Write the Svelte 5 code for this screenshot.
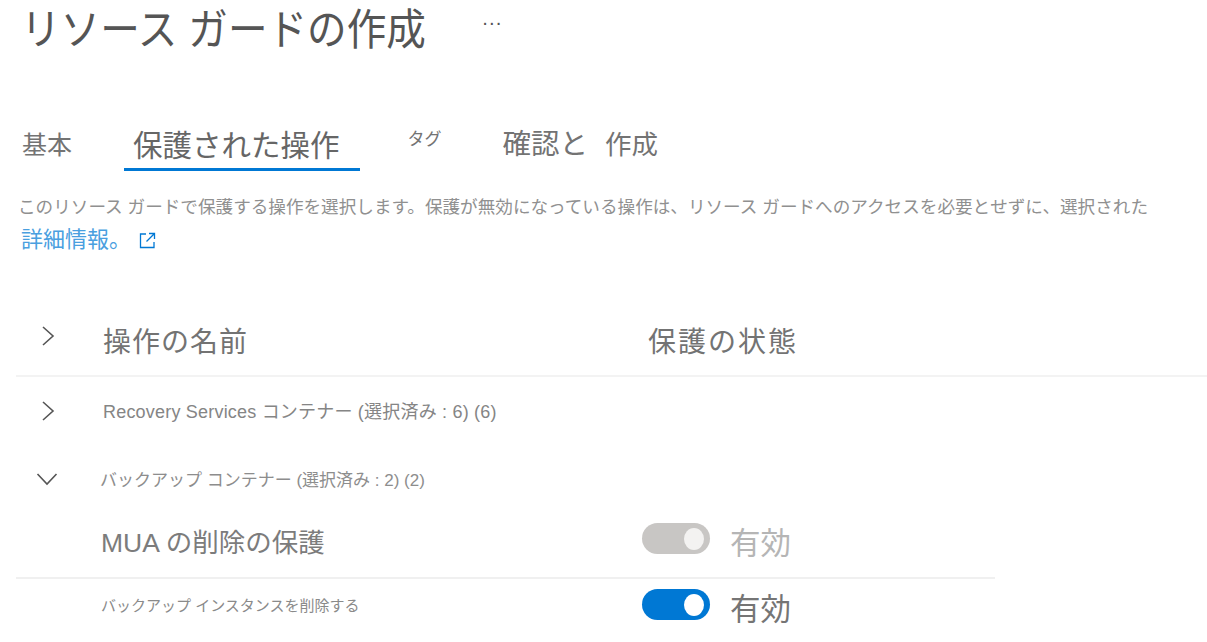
<script lang="ts">
  interface OperationRow {
    readonly name: string;
    readonly size: 'large' | 'small';
    readonly on: boolean;
    readonly disabled: boolean;
  }

  const rows: OperationRow[] = [
    { name: 'MUA の削除の保護', size: 'large', on: true, disabled: true },
    { name: 'バックアップ インスタンスを削除する', size: 'small', on: true, disabled: false },
  ];
</script>

<main class="page">
  <header class="title-row">
    <h1>リソース ガードの作成</h1>
    <span class="more">···</span>
  </header>

  <nav class="tabs">
    <span class="tab basics">基本</span>
    <span class="tab active">保護された操作</span>
    <span class="tab tags">タグ</span>
    <span class="tab review"><span class="review-a">確認と</span><span class="review-b">作成</span></span>
  </nav>

  <p class="desc">このリソース ガードで保護する操作を選択します。保護が無効になっている操作は、リソース ガードへのアクセスを必要とせずに、選択された</p>
  <a class="learn" href="#learn">
    詳細情報。
    <svg width="17" height="17" viewBox="0 0 17 17" fill="none" stroke="#0078d4" stroke-width="1.3">
      <path d="M7 2H1.500v13.500H15V10" />
      <path d="M10 1.500h5.500V7M15.500 1.500 7.500 9.500" />
    </svg>
  </a>

  <div class="table">
    <div class="row head">
      <svg class="chev up" width="14" height="22" viewBox="0 0 14 22"><path d="M2 2l10 9-10 9" /></svg>
      <span class="col-name">操作の名前</span>
      <span class="col-state">保護の状態</span>
    </div>

    <div class="row group first">
      <svg class="chev" width="14" height="22" viewBox="0 0 14 22"><path d="M2 2l10 9-10 9" /></svg>
      <span class="group-name">Recovery Services コンテナー (選択済み : 6) (6)</span>
    </div>

    <div class="row group second">
      <svg class="chev down" width="22" height="14" viewBox="0 0 22 14"><path d="M1.500 2l9.500 10 9.500-10" /></svg>
      <span class="group-name thin">バックアップ コンテナー (選択済み : 2) (2)</span>
    </div>

    {#each rows as row}
      <div class="row op" class:large={row.size === 'large'}>
        <span class="op-name">{row.name}</span>
        <span class="state" class:disabled={row.disabled}>
          <span class="toggle"><span class="knob"></span></span>
          <span class="state-label">有効</span>
        </span>
      </div>
    {/each}
  </div>
</main>

<style>
  :global(body) {
    background: #fff;
    overflow: hidden;
  }

  .page {
    width: 1207px;
    height: 642px;
    overflow: hidden;
    font-family: 'Liberation Sans', 'Noto Sans CJK JP', sans-serif;
    color: #737373;
  }

  .title-row {
    display: flex;
    align-items: flex-start;
    padding-left: 21px;
    height: 123px;
  }

  h1 {
    margin: 0;
    font-size: 39.600px;
    line-height: 60px;
    font-weight: 400;
    color: #555;
    white-space: nowrap;
    transform: scaleY(1.08);
    transform-origin: left center;
  }

  .more {
    margin-left: 56px;
    margin-top: 10px;
    font-size: 20px;
    line-height: 24px;
    color: #555;
  }

  .tabs {
    display: flex;
    align-items: flex-start;
    height: 69px;
    padding-left: 22px;
  }

  .tab {
    white-space: nowrap;
  }

  .basics {
    font-size: 25px;
    line-height: 44px;
    margin-right: 52px;
  }

  .active {
    font-size: 29.500px;
    line-height: 40px;
    margin-top: 3px;
    padding: 0 20px 2px 9px;
    border-bottom: 3px solid #0078d4;
    margin-right: 48px;
    color: #666;
  }

  .tags {
    font-size: 17px;
    line-height: 34px;
    margin-right: 61px;
  }

  .review {
    display: flex;
    align-items: baseline;
    line-height: 42px;
    font-size: 28.500px;
  }

  .review-b {
    font-size: 26.500px;
    margin-left: 17px;
  }

  .desc {
    margin: 0;
    padding-left: 18px;
    font-size: 17.600px;
    line-height: 30px;
    color: #909090;
    white-space: nowrap;
  }

  .learn {
    display: flex;
    align-items: center;
    gap: 8px;
    padding-left: 21px;
    font-size: 22px;
    line-height: 34px;
    margin-top: 1px;
    color: #4a9fdf;
    text-decoration: none;
  }

  .table {
    margin-top: 49px;
    margin-left: 16px;
  }

  .row {
    display: grid;
    grid-template-columns: 87px 545px 1fr;
    align-items: center;
  }

  .chev {
    justify-self: start;
    margin-left: 25px;
    fill: none;
    stroke: #555;
    stroke-width: 1.6;
  }

  .chev.down {
    margin-left: 20px;
  }

  .head {
    height: 71px;
    width: 1191px;
    border-bottom: 2px solid #f3f3f3;
    box-sizing: border-box;
  }

  .head .chev.up {
    margin-top: -10px;
  }

  .col-name,
  .col-state {
    font-size: 28px;
    letter-spacing: 1px;
    line-height: 40px;
    white-space: nowrap;
    margin-top: 5px;
  }

  .col-state {
    letter-spacing: 2px;
  }

  .group {
    height: 68px;
  }

  .group-name {
    grid-column: 2 / 4;
    font-size: 18px;
    letter-spacing: 0.200px;
    color: #858585;
    white-space: nowrap;
    margin-bottom: 2px;
  }

  .group-name.thin {
    margin-left: -3px;
    font-size: 17px;
    letter-spacing: 0;
    color: #8d8d8d;
  }

  .op {
    height: 64px;
    width: 979px;
    grid-template-columns: 85px 541px 1fr;
  }

  .op.large {
    height: 66px;
    border-bottom: 2px solid #f0f0f0;
    box-sizing: border-box;
  }

  .op-name {
    grid-column: 2;
    font-size: 15px;
    color: #8a8a8a;
    white-space: nowrap;
    margin-bottom: 14px;
  }

  .large .op-name {
    font-size: 26.500px;
    color: #7c7c7c;
    margin-bottom: 10px;
  }

  .state {
    display: flex;
    align-items: flex-start;
    gap: 20px;
    color: #757575;
    margin-bottom: 4px;
  }

  .state.disabled {
    color: #b5b5b5;
  }

  .toggle {
    flex: none;
    width: 68px;
    height: 31px;
    margin-top: 1px;
    border-radius: 16px;
    background: #0078d4;
    display: flex;
    align-items: center;
    justify-content: flex-end;
    padding-right: 6px;
    box-sizing: border-box;
  }

  .knob {
    width: 20px;
    height: 22px;
    border-radius: 50%;
    background: #fff;
  }

  .disabled .toggle {
    background: #c8c6c4;
  }

  .disabled .knob {
    background: #f3f2f1;
  }

  .state-label {
    font-size: 30.500px;
    line-height: 42px;
  }
</style>
